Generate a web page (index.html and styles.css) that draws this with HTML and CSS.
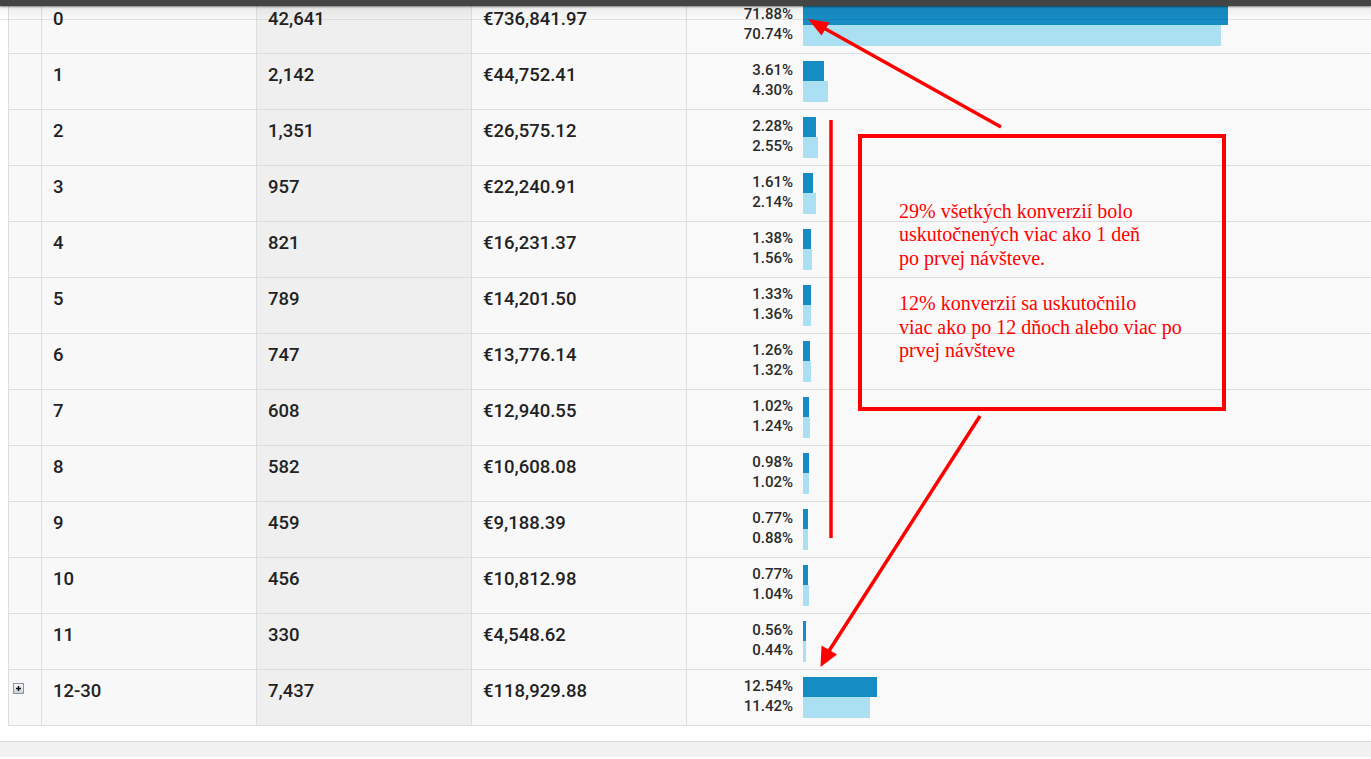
FILE: index.html
```html
<!DOCTYPE html>
<html>
<head>
<meta charset="utf-8" />
<title>Dni do konverzie</title>
<link rel="stylesheet" href="styles.css">
</head>
<body>
<div class="page">
	<div class="topbar"></div>

	<div class="report">
		<div class="row">
			<div class="cell c-icon"></div>
			<div class="cell c-dim">0</div>
			<div class="cell c-num sorted">42,641</div>
			<div class="cell c-num">€736,841.97</div>
			<div class="cell c-pct">
				<div class="labels"><span>71.88%</span><span>70.74%</span></div>
				<div class="bars"><i class="bar dark" style="width:71.88%"></i><i class="bar light" style="width:70.74%"></i></div>
			</div>
		</div>
		<div class="row">
			<div class="cell c-icon"></div>
			<div class="cell c-dim">1</div>
			<div class="cell c-num sorted">2,142</div>
			<div class="cell c-num">€44,752.41</div>
			<div class="cell c-pct">
				<div class="labels"><span>3.61%</span><span>4.30%</span></div>
				<div class="bars"><i class="bar dark" style="width:3.61%"></i><i class="bar light" style="width:4.30%"></i></div>
			</div>
		</div>
		<div class="row">
			<div class="cell c-icon"></div>
			<div class="cell c-dim">2</div>
			<div class="cell c-num sorted">1,351</div>
			<div class="cell c-num">€26,575.12</div>
			<div class="cell c-pct">
				<div class="labels"><span>2.28%</span><span>2.55%</span></div>
				<div class="bars"><i class="bar dark" style="width:2.28%"></i><i class="bar light" style="width:2.55%"></i></div>
			</div>
		</div>
		<div class="row">
			<div class="cell c-icon"></div>
			<div class="cell c-dim">3</div>
			<div class="cell c-num sorted">957</div>
			<div class="cell c-num">€22,240.91</div>
			<div class="cell c-pct">
				<div class="labels"><span>1.61%</span><span>2.14%</span></div>
				<div class="bars"><i class="bar dark" style="width:1.61%"></i><i class="bar light" style="width:2.14%"></i></div>
			</div>
		</div>
		<div class="row">
			<div class="cell c-icon"></div>
			<div class="cell c-dim">4</div>
			<div class="cell c-num sorted">821</div>
			<div class="cell c-num">€16,231.37</div>
			<div class="cell c-pct">
				<div class="labels"><span>1.38%</span><span>1.56%</span></div>
				<div class="bars"><i class="bar dark" style="width:1.38%"></i><i class="bar light" style="width:1.56%"></i></div>
			</div>
		</div>
		<div class="row">
			<div class="cell c-icon"></div>
			<div class="cell c-dim">5</div>
			<div class="cell c-num sorted">789</div>
			<div class="cell c-num">€14,201.50</div>
			<div class="cell c-pct">
				<div class="labels"><span>1.33%</span><span>1.36%</span></div>
				<div class="bars"><i class="bar dark" style="width:1.33%"></i><i class="bar light" style="width:1.36%"></i></div>
			</div>
		</div>
		<div class="row">
			<div class="cell c-icon"></div>
			<div class="cell c-dim">6</div>
			<div class="cell c-num sorted">747</div>
			<div class="cell c-num">€13,776.14</div>
			<div class="cell c-pct">
				<div class="labels"><span>1.26%</span><span>1.32%</span></div>
				<div class="bars"><i class="bar dark" style="width:1.26%"></i><i class="bar light" style="width:1.32%"></i></div>
			</div>
		</div>
		<div class="row">
			<div class="cell c-icon"></div>
			<div class="cell c-dim">7</div>
			<div class="cell c-num sorted">608</div>
			<div class="cell c-num">€12,940.55</div>
			<div class="cell c-pct">
				<div class="labels"><span>1.02%</span><span>1.24%</span></div>
				<div class="bars"><i class="bar dark" style="width:1.02%"></i><i class="bar light" style="width:1.24%"></i></div>
			</div>
		</div>
		<div class="row">
			<div class="cell c-icon"></div>
			<div class="cell c-dim">8</div>
			<div class="cell c-num sorted">582</div>
			<div class="cell c-num">€10,608.08</div>
			<div class="cell c-pct">
				<div class="labels"><span>0.98%</span><span>1.02%</span></div>
				<div class="bars"><i class="bar dark" style="width:0.98%"></i><i class="bar light" style="width:1.02%"></i></div>
			</div>
		</div>
		<div class="row">
			<div class="cell c-icon"></div>
			<div class="cell c-dim">9</div>
			<div class="cell c-num sorted">459</div>
			<div class="cell c-num">€9,188.39</div>
			<div class="cell c-pct">
				<div class="labels"><span>0.77%</span><span>0.88%</span></div>
				<div class="bars"><i class="bar dark" style="width:0.77%"></i><i class="bar light" style="width:0.88%"></i></div>
			</div>
		</div>
		<div class="row">
			<div class="cell c-icon"></div>
			<div class="cell c-dim">10</div>
			<div class="cell c-num sorted">456</div>
			<div class="cell c-num">€10,812.98</div>
			<div class="cell c-pct">
				<div class="labels"><span>0.77%</span><span>1.04%</span></div>
				<div class="bars"><i class="bar dark" style="width:0.77%"></i><i class="bar light" style="width:1.04%"></i></div>
			</div>
		</div>
		<div class="row">
			<div class="cell c-icon"></div>
			<div class="cell c-dim">11</div>
			<div class="cell c-num sorted">330</div>
			<div class="cell c-num">€4,548.62</div>
			<div class="cell c-pct">
				<div class="labels"><span>0.56%</span><span>0.44%</span></div>
				<div class="bars"><i class="bar dark" style="width:0.56%"></i><i class="bar light" style="width:0.44%"></i></div>
			</div>
		</div>
		<div class="row">
			<div class="cell c-icon">
				<svg class="expand" width="11" height="11" viewBox="0 0 11 11">
					<defs><linearGradient id="eg" x1="0" y1="0" x2="0" y2="1"><stop offset="0" stop-color="#fdfdfd"/><stop offset="1" stop-color="#c9cdd3"/></linearGradient></defs>
					<rect x="0.5" y="0.5" width="10" height="10" fill="url(#eg)" stroke="#8796a6"/>
					<path d="M3 5.5h5M5.5 3v5" stroke="#111" stroke-width="1.4"/>
				</svg>
			</div>
			<div class="cell c-dim">12-30</div>
			<div class="cell c-num sorted">7,437</div>
			<div class="cell c-num">€118,929.88</div>
			<div class="cell c-pct">
				<div class="labels"><span>12.54%</span><span>11.42%</span></div>
				<div class="bars"><i class="bar dark" style="width:12.54%"></i><i class="bar light" style="width:11.42%"></i></div>
			</div>
		</div>
	</div>

	<div class="gap"></div>
	<div class="footer"></div>

	<!-- poznamka -->
	<div class="note">
		<p>29% všetkých konverzií bolo<br>uskutočnených viac ako 1 deň<br>po prvej návšteve.</p>
		<p>12% konverzií sa uskutočnilo<br>viac ako po 12 dňoch alebo viac po<br>prvej návšteve</p>
	</div>

	<svg class="marks" width="1371" height="759" viewBox="0 0 1371 759">
		<g stroke="#f00" stroke-width="3.5" fill="none">
			<line x1="1001" y1="129" x2="822" y2="29" />
			<line x1="831" y1="122" x2="831" y2="540" />
			<line x1="980" y1="418" x2="827" y2="656" />
		</g>
		<g fill="#f00">
			<polygon points="808,21 821.5,37.5 829.5,24.5" />
			<polygon points="820.5,669 821.5,647.5 837,656.5" />
		</g>
	</svg>
</div>
</body>
</html>
```

FILE: styles.css
```css
html, body, div, p, span {
	margin: 0;
	padding: 0;
}

body {
	background: #fff;
	font-family: Roboto, "Liberation Sans", sans-serif;
	color: #222;
	overflow: hidden;
}

.page {
	position: relative;
	height: 759px;
}

/* horny pruh */
.topbar {
	position: absolute;
	top: 0;
	left: 0;
	right: 0;
	height: 8px;
	background: #444;
	box-shadow: 0 1px 2px rgba(0, 0, 0, .45);
	z-index: 5;
}

.topbar:after {
	content: '';
	position: absolute;
	top: 8px;
	left: 0;
	right: 0;
	height: 13px;
	border-bottom: 1px solid rgba(0, 0, 0, .04);
	background: linear-gradient(rgba(0, 0, 0, .05), rgba(0, 0, 0, 0));
}

.report {
	margin: -2px 0 0 8px;
}

.row {
	display: grid;
	grid-template-columns: 33px 215px 215px 215px 1fr;
	height: 55px;
	border-bottom: 1px solid #dddddd;
}

.cell {
	border-left: 1px solid #dddddd;
	background: #f8f8f8;
}

.c-dim, .c-num {
	padding: 10px 0 0 11px;
	font-size: 18.5px;
	line-height: 22px;
	font-weight: 500;
}

.c-num.sorted {
	background: #efefef;
}

.c-icon {
	padding: 13px 0 0 4px;
}

.expand {
	display: block;
}

.c-pct {
	display: flex;
	background: #f9f9f9;
	gap: 10px;
}

.labels {
	width: 106px;
	padding-top: 6px;
	display: flex;
	flex-direction: column;
	align-items: flex-end;
	font-size: 15px;
	line-height: 20px;
	font-weight: 500;
	color: #2a2a2a;
}

.bars {
	width: 591px;
	padding-top: 7px;
}

.bar {
	display: block;
	height: 20px;
	min-width: 2px;
}

.bar.dark {
	background: #168cc4;
}

.bar.light {
	height: 21px;
	background: #abe0f3;
}

.gap {
	height: 15px;
}

.footer {
	border-top: 1px solid #dcdcdc;
	background: #f1f1f1;
	height: 40px;
}

/* anotacia */
.note {
	position: absolute;
	left: 858px;
	top: 136px;
	width: 323px;
	height: 207px;
	padding: 62px 0 0 37px;
	border: 4px solid #f00;
	font-family: "Liberation Serif", "Times New Roman", serif;
	font-size: 20px;
	line-height: 23.3px;
	color: #f00;
	z-index: 3;
}

.note p + p {
	margin-top: 22.5px;
}

.marks {
	position: absolute;
	top: 0;
	left: 0;
	z-index: 4;
}
```
